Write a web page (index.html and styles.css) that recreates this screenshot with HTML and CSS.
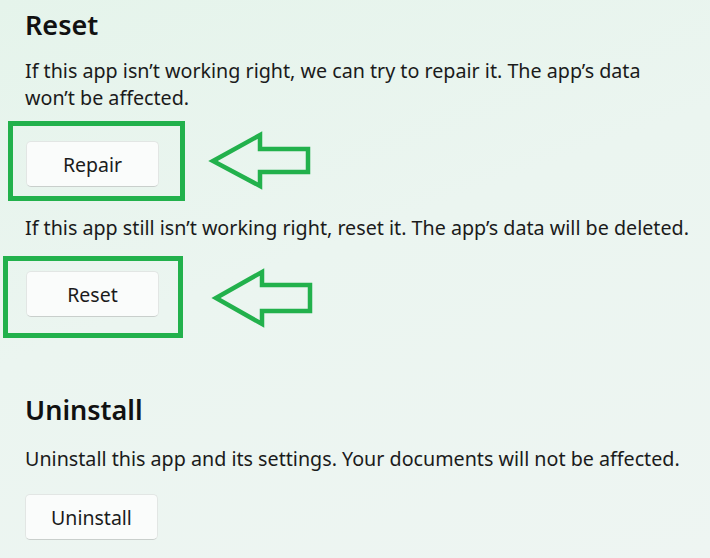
FILE: index.html
```html
<!DOCTYPE html>
<html>
<head>
    <title>App settings</title>
    <meta charset=utf-8>
    <meta name=viewport content="width=device-width, initial-scale=1">
    <link rel="stylesheet" href="styles.css">
</head>
<body>
    <main class="page">
        <section class="group">
            <h2 class="title">Reset</h2>
            <p class="desc desc-first">If this app isn’t working right, we can try to repair it. The app’s data won’t be affected.</p>
            <div class="mark-row row-repair">
                <div class="mark mark-repair">
                    <button class="btn">Repair</button>
                </div>
                <svg class="arrow arrow-repair" width="110" height="64" viewBox="0 0 110 64">
                    <polygon points="6,32 53,6 53,20 101,20 101,43 53,43 53,57" />
                </svg>
            </div>
            <p class="desc desc-reset">If this app still isn’t working right, reset it. The app’s data will be deleted.</p>
            <div class="mark-row row-reset">
                <div class="mark mark-reset">
                    <button class="btn">Reset</button>
                </div>
                <svg class="arrow arrow-reset" width="110" height="64" viewBox="0 0 110 64">
                    <polygon points="6,32 52,6 52,19 100,19 100,45 52,45 52,58" />
                </svg>
            </div>
        </section>

        <section class="group group-uninstall">
            <h2 class="title">Uninstall</h2>
            <p class="desc desc-uninstall">Uninstall this app and its settings. Your documents will not be affected.</p>
            <button class="btn btn-uninstall">Uninstall</button>
        </section>
    </main>
</body>
</html>
```

FILE: styles.css
```css
body{
    margin: 0;
    width: 710px;
    height: 558px;
    overflow: hidden;
    font-family: "Noto Sans", "Open Sans", sans-serif;
    color: #1b1b1b;
    background: linear-gradient(160deg, #e5f4eb 0%, #ebf5f0 45%, #eef5f2 100%);
}
.page{
    padding-left: 25px;
}
.title{
    margin: 7px 0 0;
    font-size: 27px;
    line-height: 36px;
    font-weight: 600;
    color: #111;
}
.desc{
    margin: 0;
    font-size: 19.7px;
    line-height: 27px;
    max-width: 685px;
    white-space: nowrap;
}
.desc-first{
    margin-top: 14px;
    white-space: normal;
    max-width: 650px;
}
.desc-reset{
    margin-top: 13px;
}
.mark-row{
    display: flex;
    align-items: center;
}
.row-repair{
    margin: 10px 0 0 -17px;
}
.row-reset{
    margin: 15px 0 0 -22px;
}
.mark{
    box-sizing: border-box;
    border: 5px solid #22b14c;
    display: flex;
    align-items: flex-start;
}
.mark-repair{
    width: 177px;
    height: 80px;
    padding: 15px 0 0 13px;
}
.mark-reset{
    width: 180px;
    height: 82px;
    padding: 10px 0 0 18px;
}
.arrow{
    fill: none;
    stroke: #22b14c;
    stroke-width: 4.5;
    stroke-linejoin: miter;
}
.arrow-repair{
    margin: 0 0 0 22px;
}
.arrow-reset{
    margin: 2px 0 0 27px;
}
.btn{
    box-sizing: border-box;
    width: 133px;
    height: 46px;
    padding: 0;
    font-family: inherit;
    font-size: 19.5px;
    color: #1b1b1b;
    background: #fafcfb;
    border: 1px solid #e2e6e4;
    border-bottom-color: #c9cfcc;
    border-radius: 5px;
}
.group-uninstall{
    margin-top: 54px;
}
.desc-uninstall{
    margin-top: 17px;
}
.btn-uninstall{
    margin-top: 22px;
}
```
